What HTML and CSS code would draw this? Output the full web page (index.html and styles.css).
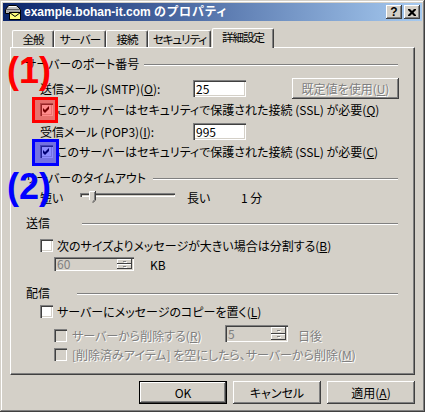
FILE: index.html
```html
<!DOCTYPE html>
<html lang="ja">
<head>
<meta charset="utf-8">
<title>example.bohan-it.com のプロパティ</title>
<link rel="stylesheet" href="styles.css">
</head>
<body>
<div class="window">
  <div class="titlebar">
    <svg class="app-icon" viewBox="0 0 16 16" width="16" height="16">
      <path d="M3.5 1.5 H11.5 L15.5 5.5 V9.5 H0.5 V5.5 Z" fill="#c0c0c0" stroke="#000"/>
      <path d="M1 5.5 H15" stroke="#606060"/>
      <path d="M4 2.5 H11" stroke="#fff"/>
      <path d="M1.5 6.5 H14.5 V8.5 H1.5 Z" fill="#a0a0a0"/>
      <rect x="4.5" y="8.5" width="11" height="7" fill="#ffff80" stroke="#000"/>
      <path d="M4.5 8.5 L10 12.5 L15.5 8.5" fill="none" stroke="#000"/>
    </svg>
    <span class="title">example.bohan-it.com <span class="title-jp">のプロパティ</span></span>
    <div class="caption-btns">
      <span class="cap-btn cap-help">?</span>
      <span class="cap-btn">
        <svg width="8" height="7" viewBox="0 0 8 7"><path d="M0 0h2l2 2 2-2h2v1l-2.5 2.5L8 6v1H6L4 5 2 7H0V6l2.5-2.5L0 1z" fill="#000"/></svg>
      </span>
    </div>
  </div>

  <div class="body">
    <div class="tabs">
      <div class="tab tab-w1">全般</div>
      <div class="tab tab-w2">サーバー</div>
      <div class="tab tab-w3">接続</div>
      <div class="tab tab-w4">セキュリティ</div>
      <div class="tab tab-active">詳細設定</div>
    </div>

    <div class="panel">
      <div class="grp-head r-head1"><span>サーバーのポート番号</span><i class="rule rule-1"></i></div>

      <div class="row r-smtp">
        <span class="fld-label">送信メール (SMTP)(<u>O</u>):</span>
        <span class="textbox">25</span>
        <span class="btn btn-default-val disabled-text">既定値を使用(<u>U</u>)</span>
      </div>

      <div class="row cb-row r-cb1">
        <span class="cb"><svg width="9" height="9" viewBox="0 0 9 9"><path d="M1 3 L3 5 L7 1 V4 L3 8 L1 6 Z" fill="#000"/></svg></span>
        <span>このサーバーはセキュリティで保護された接続 (SSL) が必要(<u>Q</u>)</span>
      </div>

      <div class="row r-pop3">
        <span class="fld-label">受信メール (POP3)(<u>I</u>):</span>
        <span class="textbox">995</span>
      </div>

      <div class="row cb-row r-cb2">
        <span class="cb"><svg width="9" height="9" viewBox="0 0 9 9"><path d="M1 3 L3 5 L7 1 V4 L3 8 L1 6 Z" fill="#000"/></svg></span>
        <span>このサーバーはセキュリティで保護された接続 (SSL) が必要(<u>C</u>)</span>
      </div>

      <div class="grp-head r-head2"><span>サーバーのタイムアウト</span><i class="rule rule-2"></i></div>

      <div class="row r-slider">
        <span class="sl-short">短い</span>
        <span class="track">
          <svg class="thumb" width="7" height="12" viewBox="0 0 7 12">
            <path d="M0 0 H7 V9 L3.5 12 L0 9 Z" fill="#D4D0C8"/>
            <path d="M0.5 9 V0.5 H6" fill="none" stroke="#fff"/>
            <path d="M6.5 0 V9.2 L3.5 11.8" fill="none" stroke="#404040"/>
            <path d="M5.5 1 V8.8 L3.5 10.6" fill="none" stroke="#808080"/>
          </svg>
        </span>
        <span class="sl-long">長い</span>
        <span>1 分</span>
      </div>

      <div class="grp-head r-head3"><span>送信</span><i class="rule rule-3"></i></div>

      <div class="row cb-row r-cb3">
        <span class="cb"></span>
        <span>次のサイズよりメッセージが大きい場合は分割する(<u>B</u>)</span>
      </div>

      <div class="row r-spin60">
        <span class="spin spin-60">
          <span class="spin-val">60</span>
          <span class="spin-btns"><i class="sb"><b></b></i><i class="sb"><b></b></i></span>
        </span>
        <span class="kb">KB</span>
      </div>

      <div class="grp-head r-head4"><span>配信</span><i class="rule rule-4"></i></div>

      <div class="row cb-row r-cb4">
        <span class="cb"></span>
        <span>サーバーにメッセージのコピーを置く(<u>L</u>)</span>
      </div>

      <div class="row cb-row sub r-cb5">
        <span class="cb cb-dis"></span>
        <span class="disabled-text dis-label">サーバーから削除する(<u>R</u>)</span>
        <span class="spin spin-5">
          <span class="spin-val">5</span>
          <span class="spin-btns"><i class="sb"><b></b></i><i class="sb"><b></b></i></span>
        </span>
        <span class="disabled-text days">日後</span>
      </div>

      <div class="row cb-row sub r-cb6">
        <span class="cb cb-dis"></span>
        <span class="disabled-text">[削除済みアイテム] を空にしたら、サーバーから削除(<u>M</u>)</span>
      </div>

      <div class="mark mark-red"></div>
      <div class="mark mark-blue"></div>
      <div class="num num-1">(1)</div>
      <div class="num num-2">(2)</div>
    </div>

    <div class="buttons">
      <span class="pbtn pbtn-default">OK</span>
      <span class="pbtn">キャンセル</span>
      <span class="pbtn">適用(<u>A</u>)</span>
    </div>
  </div>
</div>
</body>
</html>
```

FILE: styles.css
```css
* { box-sizing: border-box; }
html, body { margin: 0; padding: 0; }
body {
  width: 425px;
  height: 412px;
  overflow: hidden;
  background: #D4D0C8;
  font-family: "Noto Sans CJK JP", sans-serif;
  font-size: 12px;
  line-height: 13px;
  color: #000;
  font-feature-settings: "palt";
}
u { text-decoration: underline; text-underline-offset: 1px; }

.window {
  width: 425px;
  height: 412px;
  padding: 3px;
  background: #D4D0C8;
  box-shadow: inset -1px -1px #404040, inset 1px 1px #D4D0C8, inset -2px -2px #808080, inset 2px 2px #fff;
}

/* title bar */
.titlebar {
  height: 18px;
  display: flex;
  align-items: center;
  padding: 0 2px 0 2px;
  background: linear-gradient(to right, #0A246A, #A6CAF0);
}
.app-icon { flex: none; display: block; }
.title {
  margin-left: 3px;
  color: #fff;
  font-family: "Liberation Sans", "Noto Sans CJK JP", sans-serif;
  font-weight: bold;
  font-size: 12px;
  line-height: 18px;
  white-space: nowrap;
}
.title-jp { letter-spacing: 1px; }
.caption-btns { margin-left: auto; display: flex; gap: 2px; }
.cap-btn {
  width: 16px;
  height: 14px;
  background: #D4D0C8;
  box-shadow: inset -1px -1px #404040, inset 1px 1px #fff, inset -2px -2px #808080;
  display: flex;
  align-items: center;
  justify-content: center;
}
.cap-help {
  font-family: "Liberation Sans", sans-serif;
  font-weight: bold;
  font-size: 12px;
  line-height: 14px;
  padding-bottom: 1px;
}

/* body */
.body { padding: 0 7px; }

.tabs {
  display: flex;
  align-items: flex-end;
  height: 20px;
  margin-top: 7px;
  margin-bottom: -1px;
  padding-left: 2px;
}
.tab {
  flex: none;
  height: 17px;
  margin-bottom: 1px;
  display: flex;
  align-items: center;
  justify-content: center;
  border-top: 1px solid #fff;
  border-left: 1px solid #fff;
  border-right: 1px solid #404040;
  border-radius: 2px 2px 0 0;
  box-shadow: inset -1px 0 #808080;
  padding-top: 1px;
  font-size: 11.5px;
  letter-spacing: -1px;
  white-space: nowrap;
}
.tab-w1 { width: 42px; }
.tab-w2 { width: 52px; }
.tab-w3 { width: 42px; }
.tab-w4 { width: 63px; }
.tab-active {
  width: 62px;
  height: 20px;
  margin-left: 1px;
  margin-bottom: 0;
  padding-top: 0;
  padding-bottom: 2px;
  background: #D4D0C8;
  position: relative;
  z-index: 1;
}

.panel {
  position: relative;
  height: 328px;
  border-top: 1px solid #fff;
  border-left: 1px solid #fff;
  border-right: 1px solid #404040;
  border-bottom: 1px solid #404040;
  box-shadow: inset -1px -1px #808080;
}

.row { display: flex; align-items: center; height: 13px; white-space: nowrap; }
.grp-head { display: flex; height: 13px; padding-left: 14px; white-space: nowrap; align-items: center; }
.rule {
  display: block;
  align-self: flex-start;
  margin-top: 7px;
  margin-left: auto;
  margin-right: 16px;
  height: 2px;
  border-top: 1px solid #808080;
  border-bottom: 1px solid #fff;
}
.rule-1 { width: 254px; }
.rule-2 { width: 245px; }
.rule-3 { width: 316px; }
.rule-4 { width: 321px; }

.r-head1 { margin-top: 9px; }
.r-smtp { margin-top: 8px; height: 21px; padding-left: 29px; }
.r-cb1 { margin-top: 4px; }
.r-pop3 { margin-top: 7px; height: 17px; padding-left: 29px; }
.r-cb2 { margin-top: 5px; }
.r-head2 { margin-top: 13px; }
.r-slider { margin-top: 6px; height: 14px; padding-left: 29px; }
.r-head3 { margin-top: 12px; padding-left: 15px; }
.r-cb3 { margin-top: 10px; }
.r-spin60 { margin-top: 5px; height: 14px; padding-left: 43px; }
.r-head4 { margin-top: 15px; padding-left: 15px; }
.r-cb4 { margin-top: 6px; }
.r-cb5 { margin-top: 11px; }
.r-cb6 { margin-top: 6px; }

.fld-label { width: 153px; }
.textbox {
  width: 53px;
  height: 17px;
  background: #fff;
  padding: 2px 0 0 3px;
  box-shadow: inset 1px 1px #808080, inset 2px 2px #404040, inset -1px -1px #fff, inset -2px -2px #D4D0C8;
  line-height: 13px;
}
.btn {
  width: 107px;
  height: 21px;
  margin-left: 46px;
  display: flex;
  align-items: center;
  justify-content: center;
  box-shadow: inset -1px -1px #404040, inset 1px 1px #fff, inset -2px -2px #808080;
}
.disabled-text { color: #808080; text-shadow: 1px 1px 0 #fff; }

.cb-row { padding-left: 29px; }
.cb-row.sub { padding-left: 43px; }
.cb {
  flex: none;
  width: 13px;
  height: 13px;
  margin-right: 4px;
  background: #fff;
  box-shadow: inset 1px 1px #808080, inset 2px 2px #404040, inset -1px -1px #fff, inset -2px -2px #D4D0C8;
  display: flex;
  align-items: center;
  justify-content: center;
}
.cb svg { display: block; }
.cb-dis { background: #D4D0C8; margin-right: 5px; }

.sl-short { width: 40px; }
.track {
  position: relative;
  width: 95px;
  height: 4px;
  align-self: flex-start;
  margin-top: 3px;
  box-shadow: inset 1px 1px #808080, inset 2px 2px #404040, inset -1px -1px #fff;
}
.thumb { position: absolute; left: 9px; top: -2px; display: block; }
.sl-long { width: 54px; margin-left: 12px; }

.spin {
  display: flex;
  height: 14px;
  padding: 2px;
  background: #D4D0C8;
  box-shadow: inset 1px 1px #808080, inset 2px 2px #404040, inset -1px -1px #fff, inset -2px -2px #D4D0C8;
}
.spin-60 { width: 80px; }
.spin-5 { width: 63px; height: 17px; align-self: flex-start; margin-top: -4px; }
.spin-val { flex: 1; color: #808080; line-height: 10px; padding-left: 1px; }
.spin-5 .spin-val { line-height: 13px; }
.spin-btns { width: 15px; display: flex; flex-direction: column; }
.sb {
  flex: 1;
  display: flex;
  align-items: center;
  justify-content: center;
  box-shadow: inset -1px -1px #404040, inset 1px 1px #fff;
}
.sb b { width: 3px; height: 1px; background: #808080; box-shadow: 1px 1px #fff; }
.kb { margin-left: 16px; }
.dis-label { width: 153px; }
.days { margin-left: 10px; }

/* annotation overlays */
.mark { position: absolute; border: 3px solid #ff0000; }
.mark-red { left: 21px; top: 49px; width: 26px; height: 26px; background: rgba(255, 0, 0, 0.45); }
.mark-blue { left: 21px; top: 91px; width: 27px; height: 27px; border-color: #0000ff; background: rgba(0, 0, 255, 0.45); }
.num {
  position: absolute;
  font-family: "Liberation Sans", sans-serif;
  font-weight: bold;
  font-size: 36px;
  line-height: 36px;
  font-feature-settings: normal;
}
.num-1 { left: -4px; top: 5px; color: #ff0000; }
.num-2 { left: -4px; top: 121px; color: #0000ff; }

/* bottom buttons */
.buttons {
  display: flex;
  justify-content: flex-end;
  gap: 6px;
  margin-top: 6px;
}
.pbtn {
  width: 88px;
  height: 23px;
  display: flex;
  align-items: center;
  justify-content: center;
  box-shadow: inset -1px -1px #404040, inset 1px 1px #fff, inset -2px -2px #808080;
}
.pbtn-default {
  box-shadow: inset 0 0 0 1px #000, inset -2px -2px #404040, inset 2px 2px #fff, inset -3px -3px #808080;
}
```
